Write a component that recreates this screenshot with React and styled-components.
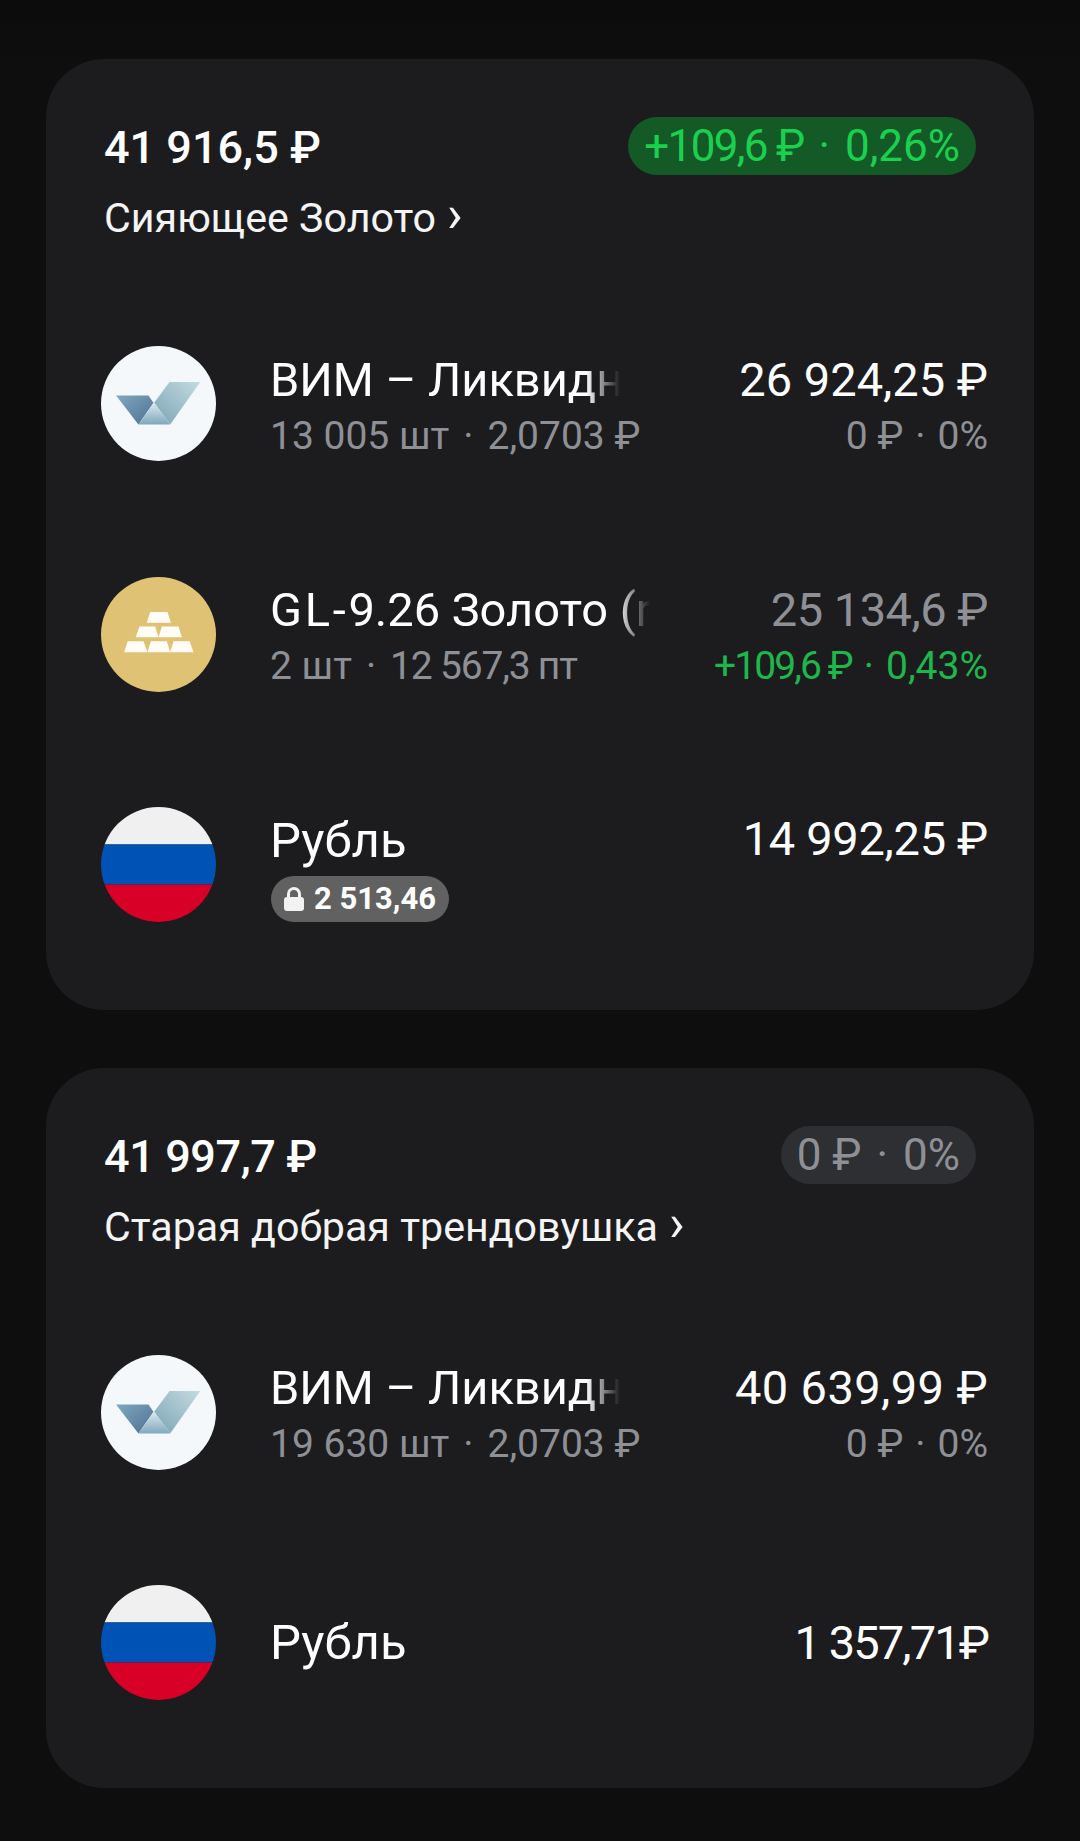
import React from "react";
import styled, { createGlobalStyle } from "styled-components";

const Global = createGlobalStyle`
  html, body { margin: 0; padding: 0; background: #0e0e0f; }
  body { font-family: Roboto, "Noto Sans", sans-serif; -webkit-font-smoothing: antialiased; }
`;
const Page = styled.main`
  width: 1080px; height: 1841px; box-sizing: border-box; overflow: hidden;
  padding-top: 59px; display: flex; flex-direction: column; gap: 58px;
  background: linear-gradient(#0b0b0c 0, #0e0e0f 60px);
`;
const Card = styled.section`
  margin: 0 46px; border-radius: 58px; background: #1c1c1f;
  padding: 58px 46px 29.5px 55px;
`;
const Header = styled.header`
  display: grid; grid-template-columns: 1fr auto; align-items: start; row-gap: 16px;
  margin: 0 12px 0 3px; height: 171.5px; align-content: start;
`;
const Total = styled.div`
  padding-top: 2px; font-size: 45px; font-weight: 500; color: #fff; line-height: 58px;
  white-space: nowrap; letter-spacing: ${p => p.$ls || 0}px;
`;
const Pill = styled.div`
  height: 58px; border-radius: 29px; padding: 0 16px; display: flex; align-items: center;
  font-size: 44px; white-space: nowrap;
  background: ${p => (p.$up ? "#145a26" : "#2e2f33")};
  color: ${p => (p.$up ? "#1ad14f" : "#8e9096")};
`;
const Portfolio = styled.div`
  grid-column: 1 / -1; display: flex; align-items: center; gap: 11px;
  font-size: 41.2px; color: #f4f4f5; line-height: 50px; white-space: nowrap;
`;
const Chevron = styled.span`
  font-size: 52px; line-height: 50px; transform: translateY(-3px);
`;
const Row = styled.div`
  height: 230.5px; display: flex; align-items: center; gap: 54px;
`;
const Avatar = styled.svg`
  width: 115px; height: 115px; flex: none; display: block;
`;
const Info = styled.div`
  flex: 1; min-width: 0; display: flex; flex-direction: column;
`;
const Name = styled.div`
  width: ${p => p.$w}px; overflow: hidden; white-space: nowrap;
  font-size: ${p => p.$size || 47}px; line-height: 58px; color: #fff;
  ${p => p.$fade && "-webkit-mask-image: linear-gradient(90deg, #000 calc(100% - 34px), transparent); mask-image: linear-gradient(90deg, #000 calc(100% - 34px), transparent);"}
`;
const Sub = styled.div`
  font-size: 39px; line-height: 48px; margin: 3px 0 -3px; color: #8e9096; white-space: nowrap;
`;
const Side = styled.div`
  display: flex; flex-direction: column; align-items: flex-end;
  padding-bottom: ${p => (p.$raised ? 52 : 0)}px;
`;
const Amount = styled.div`
  font-size: 47px; line-height: 58px; white-space: nowrap;
  letter-spacing: ${p => p.$ls || 0}px;
  color: ${p => (p.$dim ? "#8e9096" : "#fff")};
`;
const Change = styled(Sub)`
  color: ${p => (p.$up ? "#1eb74b" : "#8e9096")};
`;
const Dot = styled.span`
  margin: 0 ${p => p.$m || 14}px;
`;
const Tight = styled.span`
  letter-spacing: ${p => p.$ls}px;
`;
const Lock = styled.div`
  display: inline-flex; align-self: flex-start; align-items: center; gap: 10px;
  height: 46px; margin: 6px 0 -4px 1px; padding: 0 13px; border-radius: 23px; background: #616161;
  color: #fff; font-size: 31px; font-weight: 700; white-space: nowrap;
`;
const LockIcon = styled.svg`
  width: 20px; height: 24px; flex: none;
`;

const Vim = ({ id }) => (
  <Avatar viewBox="63 48 344 344">
    <defs>
      <linearGradient id={`${id}a`} x1="0" y1="0" x2="1" y2="1">
        <stop offset="0" stopColor="#7fa9c0" /><stop offset="1" stopColor="#4f6f92" />
      </linearGradient>
      <linearGradient id={`${id}b`} x1="1" y1="0" x2="0" y2="1">
        <stop offset="0" stopColor="#c4dbe1" /><stop offset="1" stopColor="#7ba4b4" />
      </linearGradient>
      <linearGradient id={`${id}c`} x1="0" y1="0" x2="0" y2="1">
        <stop offset="0" stopColor="#dce9ee" /><stop offset="1" stopColor="#7fa7bd" />
      </linearGradient>
    </defs>
    <circle cx="235" cy="220" r="172" fill="#f4f8fb" />
    <polygon points="108,196 205,196 220,218 175,283" fill={`url(#${id}a)`} />
    <polygon points="268,156 360,156 270,283 222,218" fill={`url(#${id}b)`} />
    <polygon points="222,218 175,283 270,283" fill={`url(#${id}c)`} />
  </Avatar>
);
const Gold = () => (
  <Avatar viewBox="63 50 344 344">
    <circle cx="235" cy="222" r="172" fill="#e0c274" />
    <g fill="#fffdf6">
      <polygon points="210,155 262,155 272,187 200,187" />
      <polygon points="178,198 225,198 235,230 167,230" />
      <polygon points="245,198 295,198 305,230 235,230" />
      <polygon points="143,242 190,242 202,275 132,275" />
      <polygon points="212,242 260,242 270,275 202,275" />
      <polygon points="280,242 328,242 340,275 270,275" />
    </g>
  </Avatar>
);
const Flag = ({ id }) => (
  <Avatar viewBox="0 0 344 344">
    <clipPath id={id}><circle cx="172" cy="172" r="172" /></clipPath>
    <g clipPath={`url(#${id})`}>
      <rect width="344" height="112" fill="#f0f0f0" />
      <rect y="112" width="344" height="120" fill="#0052b4" />
      <rect y="232" width="344" height="112" fill="#d80027" />
    </g>
  </Avatar>
);

const Sep = ({ m }) => <Dot $m={m}>·</Dot>;

export default function App() {
  return (
    <Page>
      <Global />
      <Card>
        <Header>
          <Total $ls={0}>41 916,5 ₽</Total>
          <Pill $up><Tight $ls={-1.7}>+109,6 ₽</Tight><Sep m={15} />0,26%</Pill>
          <Portfolio>Сияющее Золото<Chevron>›</Chevron></Portfolio>
        </Header>
        <Row>
          <Vim id="v1" />
          <Info>
            <Name $w={350} $fade>ВИМ – Ликвидность</Name>
            <Sub>13 005 шт<Sep />2,0703 ₽</Sub>
          </Info>
          <Side><Amount>26 924,25 ₽</Amount><Change>0 ₽<Sep m={12} />0%</Change></Side>
        </Row>
        <Row>
          <Gold />
          <Info>
            <Name $w={380} $fade><Tight $ls={2.7}>GL-</Tight>9.26 Золото (ruonia)</Name>
            <Sub>2 шт<Sep /><Tight $ls={-1.2}>12 567,3 пт</Tight></Sub>
          </Info>
          <Side>
            <Amount $dim $ls={-0.5}>25 134,6 ₽</Amount>
            <Change $up><Tight $ls={-1.9}>+109,6 ₽</Tight><Sep m={12} />0,43%</Change>
          </Side>
        </Row>
        <Row>
          <Flag id="f1" />
          <Info>
            <Name $w={380} $size={49}>Рубль</Name>
            <Lock>
              <LockIcon viewBox="0 0 20 24">
                <path d="M4.5 10V7a5.5 5.5 0 0 1 11 0v3" fill="none" stroke="#f2f2f2" strokeWidth="3" />
                <rect x="0" y="10" width="20" height="14" rx="3" fill="#f2f2f2" />
              </LockIcon>
              2 513,46
            </Lock>
          </Info>
          <Side $raised><Amount $ls={-0.3}>14 992,25 ₽</Amount></Side>
        </Row>
      </Card>
      <Card>
        <Header>
          <Total $ls={-0.4}>41 997,7 ₽</Total>
          <Pill>0 ₽<Sep m={15} />0%</Pill>
          <Portfolio>Старая добрая трендовушка<Chevron>›</Chevron></Portfolio>
        </Header>
        <Row>
          <Vim id="v2" />
          <Info>
            <Name $w={350} $fade>ВИМ – Ликвидность</Name>
            <Sub>19 630 шт<Sep />2,0703 ₽</Sub>
          </Info>
          <Side><Amount $ls={0.4}>40 639,99 ₽</Amount><Change>0 ₽<Sep m={12} />0%</Change></Side>
        </Row>
        <Row>
          <Flag id="f2" />
          <Info>
            <Name $w={380} $size={49}>Рубль</Name>
          </Info>
          <Side><Amount $ls={-1.9}>1 357,71₽</Amount></Side>
        </Row>
      </Card>
    </Page>
  );
}
